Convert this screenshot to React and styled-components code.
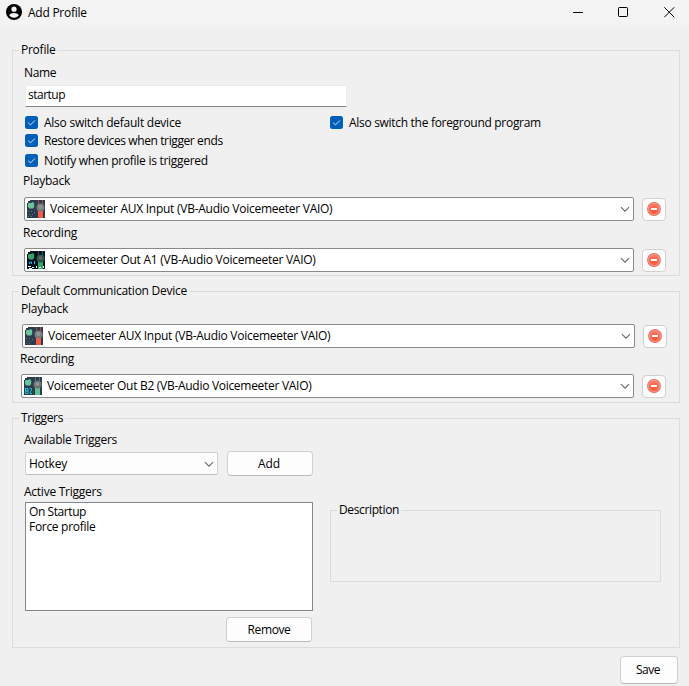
import React from 'react';
import styled, { createGlobalStyle } from 'styled-components';

const GlobalStyle = createGlobalStyle`
  *, *::before, *::after { box-sizing: border-box; }
  body {
    margin: 0;
    background: #f0f0f0;
    color: #000;
    font: 12px/17px "Open Sans", "Noto Sans", sans-serif;
    letter-spacing: -0.25px;
    overflow: hidden;
  }
`;

const Window = styled.div`
  width: 689px;
  height: 686px;
  background: #f0f0f0;
`;

const TitleBar = styled.header`
  display: flex;
  align-items: flex-start;
  height: 28px;
  padding: 4px 14px 0 6px;
  background: #f3f3f3;
`;

const Title = styled.h1`
  flex: 1;
  margin: 0 0 0 6px;
  font: inherit;
`;

const WindowControls = styled.div`
  display: flex;
  gap: 34px;
  margin-top: 3px;
  svg { display: block; }
  svg:last-child { margin-left: 1px; }
`;

const Content = styled.main`
  display: flex;
  flex-direction: column;
  gap: 15px;
  padding: 22px 9px 0 12px;
`;

const Group = styled.section`
  width: ${(p) => p.$width || 668}px;
  height: ${(p) => p.$height}px;
  border: 1px solid #dcdcdc;
`;

const Legend = styled.h2`
  width: fit-content;
  height: 17px;
  margin: -10px 0 0 6px;
  padding: 0 2px;
  background: #f0f0f0;
  font: inherit;
  letter-spacing: ${(p) => p.$track || -0.25}px;
  white-space: nowrap;
`;

const Label = styled.div`
  height: 17px;
  margin: ${(p) => p.$top}px 0 0 ${(p) => p.$left}px;
  letter-spacing: ${(p) => p.$track || -0.25}px;
  white-space: nowrap;
`;

const NameInput = styled.input`
  display: block;
  width: 322px;
  height: 22px;
  margin: 4px 0 0 12px;
  padding: 0 2px 3px;
  border: 1px solid #ebebeb;
  border-bottom-color: #868686;
  border-radius: 2px 2px 0 0;
  background: #fff;
  color: #000;
  font: inherit;
  letter-spacing: -0.5px;
  outline: none;
`;

const Checks = styled.div`
  display: grid;
  grid-template-columns: 305px auto;
  grid-template-rows: 18px 20px 17px;
  margin: 7px 0 0 12px;
`;

const CheckLabel = styled.label`
  display: flex;
  align-items: flex-start;
  gap: 6px;
  height: 17px;
  grid-column: ${(p) => p.$column || 1};
  letter-spacing: ${(p) => p.$track || -0.25}px;
  white-space: nowrap;
  svg { display: block; margin-top: 2px; }
`;

const DeviceRow = styled.div`
  display: flex;
  margin: ${(p) => p.$top}px 0 0 ${(p) => p.$left}px;
`;

const DeviceSelect = styled.div`
  display: flex;
  align-items: center;
  width: ${(p) => p.$width}px;
  height: 24px;
  padding: 0 3px 0 2px;
  border: 1px solid #8a8a8a;
  border-radius: 2px;
  background: #fff;
  svg { display: block; flex: none; }
`;

const DeviceName = styled.span`
  flex: 1;
  margin: -1px 0 0 5px;
  letter-spacing: ${(p) => p.$track || -0.26}px;
  white-space: nowrap;
`;

const RemoveDevice = styled.button`
  display: flex;
  align-items: center;
  justify-content: center;
  width: 24px;
  height: 23px;
  margin: 1px 0 0 8px;
  padding: 0 0 1px;
  border: 1px solid #d0d0d0;
  border-radius: 4px;
  background: #fdfdfd;
  svg { display: block; }
`;

const TriggerColumns = styled.div`
  display: flex;
  gap: 17px;
  margin: 5px 0 0 12px;
`;

const TriggerColumn = styled.div`
  display: flex;
  flex-direction: column;
  width: 288px;
`;

const AddRow = styled.div`
  display: flex;
  align-items: center;
  justify-content: space-between;
  margin-top: 3px;
`;

const TriggerSelect = styled.div`
  display: flex;
  align-items: center;
  justify-content: space-between;
  width: 193px;
  height: 23px;
  padding: 0 3px;
  border: 1px solid #d0d0d0;
  border-bottom-color: #bcbcbc;
  border-radius: 2px;
  background: #fdfdfd;
`;

const Button = styled.button`
  width: ${(p) => p.$width}px;
  height: ${(p) => p.$height}px;
  padding: 0 ${(p) => p.$shift || 0}px ${(p) => p.$lift || 0}px 0;
  border: 1px solid #d0d0d0;
  border-bottom-color: #bababa;
  border-radius: 4px;
  background: #fdfdfd;
  color: #000;
  font: inherit;
  letter-spacing: ${(p) => p.$track || -0.25}px;
`;

const TriggerList = styled.ul`
  height: 109px;
  margin: 2px 0 6px;
  padding: 1px 3px;
  border: 1px solid #828790;
  background: #fff;
  list-style: none;
`;

const TriggerItem = styled.li`
  height: 15px;
  line-height: 15px;
  letter-spacing: ${(p) => p.$track}px;
`;

const RemoveSlot = styled.div`
  display: flex;
  justify-content: flex-end;
  padding-right: 1px;
`;

const DescriptionSlot = styled.div`
  padding-top: 79px;
`;

const Footer = styled.footer`
  display: flex;
  justify-content: flex-end;
  padding: 8px 11px 0 0;
`;

const AccountIcon = () => (
  <svg width="16" height="16" viewBox="0 0 16 16">
    <circle cx="8" cy="8" r="8" fill="#000" />
    <circle cx="8" cy="5.2" r="2.6" fill="#f3f3f3" />
    <path d="M3.2 11.2C3.9 9.6 6 8.9 8 8.9s4.1.7 4.8 2.3C11.8 12.8 10 13.7 8 13.7s-3.8-.9-4.8-2.5Z" fill="#f3f3f3" />
  </svg>
);

const CheckIcon = () => (
  <svg width="13" height="13" viewBox="0 0 13 13">
    <rect width="13" height="13" rx="2.5" fill="#005fb8" />
    <path d="M3.2 6.7 5.5 8.9 9.9 4.5" fill="none" stroke="#d5e5f4" strokeWidth="1" />
  </svg>
);

const Chevron = () => (
  <svg width="10" height="6" viewBox="0 0 10 6">
    <path d="M.9 1.200 5 5.200 9.100 1.200" fill="none" stroke="#666" strokeWidth="1.05" />
  </svg>
);

const MinusIcon = () => (
  <svg width="14" height="14" viewBox="0 0 14 14">
    <defs>
      <radialGradient id="minusFill" cx="50%" cy="65%" r="60%">
        <stop offset="0" stopColor="#ff4f2e" />
        <stop offset="1" stopColor="#f4806c" />
      </radialGradient>
    </defs>
    <circle cx="7" cy="7" r="6.9" fill="#e2685a" />
    <circle cx="7" cy="7" r="5.7" fill="url(#minusFill)" stroke="#f9a392" strokeWidth=".8" />
    <rect x="4" y="6" width="6" height="2" fill="#fff" />
  </svg>
);

const palettes = {
  aux: { bg: '#2d3c4d', strip: '#f45b45', lines: '#a84b47', knob: '#7b7b7b', core: '#8d9693', dial: '#68c49a' },
  a1: { bg: '#06101f', strip: '#32a866', lines: '#1d5a40', knob: '#35504d', core: '#526864', dial: '#38a169' },
  b2: { bg: '#2d3c4d', strip: '#5fbd90', lines: '#46806d', knob: '#6c7476', core: '#8d9693', dial: '#68c49a' },
};

const marks = {
  aux: <path d="M1 11h1v1H1zM4 11h1v1H4zM7 12h1v1H7zM2 14h1v1H2zM5 14h1v1H5zM1 16h1v1H1zM4 16h1v1H4z" fill="#60768a" />,
  a1: (
    <>
      <path d="M2.500 13v-2h2v2M7.500 10v3" fill="none" stroke="#19b9ec" />
      <path d="M1 15h3v1H1zM5 16h2v1H5zM9 15h1v2H9zM12 16h2v1h-2zM16 15h1v2h-1zM2 17h3v1H2z" fill="#fff" />
    </>
  ),
  b2: <path d="M1.500 11v5.500h2.500v-2.500H2h2v-2.500H1M5.500 11.500h2V13.500l-1.500 1.500v1.500h2" fill="none" stroke="#13cfe6" strokeWidth=".9" />,
};

const DeviceIcon = ({ kind }) => {
  const c = palettes[kind];
  return (
    <svg width="18" height="18" viewBox="0 0 18 18">
      <rect width="18" height="18" fill={c.bg} />
      <path d="M11 0h1v4h-1zM15 0h1v4h-1z" fill={c.lines} />
      <rect x="11" y="9" width="5" height="9" fill={c.strip} />
      <circle cx="13.500" cy="7.500" r="4" fill={c.knob} />
      <circle cx="13.500" cy="7" r="2" fill={c.core} />
      <path d="M1 3.500 2 3h2l2-1 1.200 1.500v3.500L6 8.500H2.500L1 7z" fill={c.dial} />
      <path d="M0 0h3v1H1v2H0z" fill="#fff" />
      {marks[kind]}
    </svg>
  );
};

const Device = ({ kind, name, left, top, width, track }) => (
  <DeviceRow $left={left} $top={top}>
    <DeviceSelect $width={width}>
      <DeviceIcon kind={kind} />
      <DeviceName $track={track}>{name}</DeviceName>
      <Chevron />
    </DeviceSelect>
    <RemoveDevice aria-label="Remove device">
      <MinusIcon />
    </RemoveDevice>
  </DeviceRow>
);

const Check = ({ children, column, track }) => (
  <CheckLabel $column={column} $track={track}>
    <CheckIcon />
    {children}
  </CheckLabel>
);

export default function App() {
  return (
    <Window>
      <GlobalStyle />
      <TitleBar>
        <AccountIcon />
        <Title>Add Profile</Title>
        <WindowControls>
          <svg width="11" height="11"><path d="M0 5.500h10" stroke="#000" /></svg>
          <svg width="11" height="11"><rect x=".5" y=".5" width="9" height="9" rx=".8" fill="none" stroke="#000" /></svg>
          <svg width="11" height="11"><path d="M.3.3l9.900 9.900M10.200.3L.3 10.200" stroke="#000" /></svg>
        </WindowControls>
      </TitleBar>

      <Content>
        <Group $height={226}>
          <Legend>Profile</Legend>
          <Label $left={11} $top={6} $track={-0.35}>Name</Label>
          <NameInput defaultValue="startup" />
          <Checks>
            <Check>Also switch default device</Check>
            <Check column={2} track={-0.3}>Also switch the foreground program</Check>
            <Check track={-0.39}>Restore devices when trigger ends</Check>
            <Check track={-0.28}>Notify when profile is triggered</Check>
          </Checks>
          <Label $left={10} $top={3}>Playback</Label>
          <Device kind="aux" name="Voicemeeter AUX Input (VB-Audio Voicemeeter VAIO)" left={11} top={8} width={610} />
          <Label $left={10} $top={3}>Recording</Label>
          <Device kind="a1" name="Voicemeeter Out A1 (VB-Audio Voicemeeter VAIO)" left={11} top={7} width={610} />
        </Group>

        <Group $height={112}>
          <Legend>Default Communication Device</Legend>
          <Label $left={8} $top={1}>Playback</Label>
          <Device kind="aux" name="Voicemeeter AUX Input (VB-Audio Voicemeeter VAIO)" left={9} top={7} width={613} />
          <Label $left={7} $top={2}>Recording</Label>
          <Device kind="b2" name="Voicemeeter Out B2 (VB-Audio Voicemeeter VAIO)" left={8} top={7} width={613} track={-0.29} />
        </Group>

        <Group $height={230}>
          <Legend $track={-0.37}>Triggers</Legend>
          <TriggerColumns>
            <TriggerColumn>
              <Label $left={-1} $top={0} $track={-0.29}>Available Triggers</Label>
              <AddRow>
                <TriggerSelect>
                  Hotkey
                  <Chevron />
                </TriggerSelect>
                <Button $width={86} $height={25} $shift={2} $track={-0.1}>Add</Button>
              </AddRow>
              <Label $left={-1} $top={7}>Active Triggers</Label>
              <TriggerList>
                <TriggerItem $track={-0.42}>On Startup</TriggerItem>
                <TriggerItem $track={-0.3}>Force profile</TriggerItem>
              </TriggerList>
              <RemoveSlot>
                <Button $width={86} $height={25} $track={-0.37}>Remove</Button>
              </RemoveSlot>
            </TriggerColumn>
            <DescriptionSlot>
              <Group $width={331} $height={72}>
                <Legend $track={-0.37}>Description</Legend>
              </Group>
            </DescriptionSlot>
          </TriggerColumns>
        </Group>
      </Content>

      <Footer>
        <Button $width={58} $height={28} $shift={2} $lift={1} $track={-0.45}>Save</Button>
      </Footer>
    </Window>
  );
}
